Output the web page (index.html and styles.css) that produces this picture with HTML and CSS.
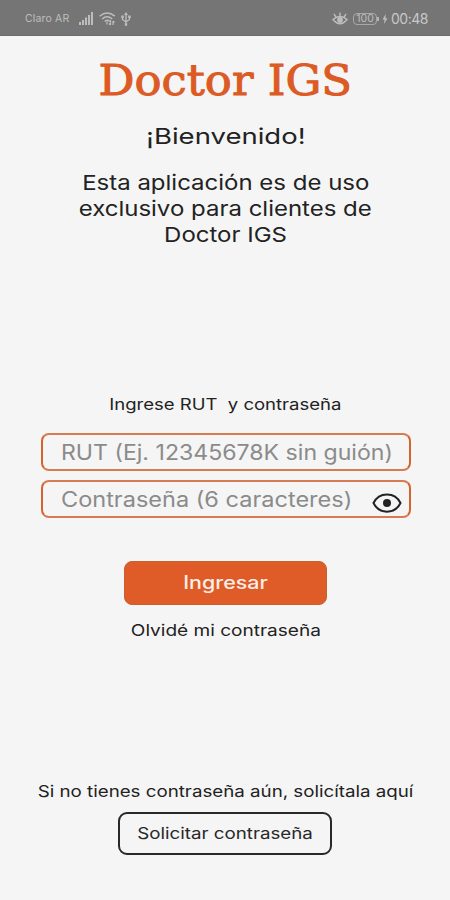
FILE: index.html
```
<!DOCTYPE html>
<html lang="es">
<head>
<meta charset="utf-8">
<title>Doctor IGS</title>
<link rel="stylesheet" href="styles.css">
</head>
<body>
<header class="status">
  <span class="carrier">Claro AR</span>
  <svg class="signal" width="14" height="13" viewBox="0 0 14 13" fill="currentColor"><path d="M0 10h2v3H0zM3 8h2v5H3zM6 5.500h2V13H6zM9 3h2v10H9zM12 0h2v13h-2z"/></svg>
  <svg class="wifi" width="17" height="14" viewBox="0 0 17 14" fill="none" stroke="currentColor" stroke-width="1.500"><path d="M.7 4.200Q8-2 15.800 4.200M3.200 7Q8 2.500 13.200 7M5.700 9.500Q8 7 10.800 9.500"/><path d="M8 9.500v3M11.500 8v5m-1.500-1.500 1.500 1.500M14 13V9m0 0 1.500 1.500" stroke-width="1.200"/></svg>
  <svg class="usb" width="10" height="14" viewBox="0 0 10 14" fill="none" stroke="currentColor" stroke-width="1.300"><path d="M5 13V2M1.500 4.500v3L5 10l3.500-2.500v-3"/><path d="M5 0l2 3H3zM.3 3.500h2.500V6H.3zM7.200 3.500h2.500V6H7.200zM3.800 11.300h2.400v2.400H3.800z" fill="currentColor" stroke="none"/></svg>
  <svg class="comfort" width="16" height="14" viewBox="0 0 16 14" fill="none" stroke="currentColor" stroke-width="1.400"><path d="M1 7.500Q8 1.500 15 7.500 8 16 1 7.500zM8 4V.5M3.800 4.800 2 2M12.200 4.800 14 2"/><circle cx="8" cy="8" r="2.200" fill="currentColor"/></svg>
  <span class="battery">100</span>
  <svg class="bolt" width="6" height="12" viewBox="0 0 6 12" fill="currentColor"><path d="M3.700 1 .5 6.500h2L2 11l3.500-5.700h-2z"/></svg>
  <span class="clock">00:48</span>
</header>
<main class="screen">
  <h1 class="brand"><span class="t">Doctor IGS</span></h1>
  <h2 class="welcome"><span class="t">¡Bienvenido!</span></h2>
  <p class="intro"><span class="t">Esta aplicación es de uso</span><br><span class="t">exclusivo para clientes de</span><br><span class="t">Doctor IGS</span></p>
  <form class="login">
    <p class="prompt"><span class="t">Ingrese RUT&nbsp; y contraseña</span></p>
    <div class="field"><span class="hint hint-rut">RUT (Ej. 12345678K sin guión)</span></div>
    <div class="field"><span class="hint hint-pass">Contraseña (6 caracteres)</span>
      <svg class="eye" width="30" height="20" viewBox="0 0 30 20" fill="none" stroke="#222" stroke-width="2"><path d="M1.500 10C7-1.500 23-1.500 28.500 10 23 21.500 7 21.500 1.500 10z"/><circle cx="15" cy="10" r="4" fill="#222" stroke="none"/></svg>
    </div>
    <button class="submit" type="button"><span class="t">Ingresar</span></button>
    <a class="forgot"><span class="t">Olvidé mi contraseña</span></a>
  </form>
  <section class="request">
    <p class="ask"><span class="t">Si no tienes contraseña aún, solicítala aquí</span></p>
    <button class="outline" type="button"><span class="t">Solicitar contraseña</span></button>
  </section>
</main>
</body>
</html>
```
FILE: styles.css
```
* { box-sizing: border-box; margin: 0; padding: 0; }
body {
  width: 450px;
  height: 900px;
  background: #f5f5f5;
  color: #222;
  font-family: Inter, sans-serif;
  overflow: hidden;
}
.status {
  display: flex;
  align-items: center;
  height: 36px;
  padding: 2px 22px 0 25px;
  background: #757575;
  border-bottom: 1px solid #6c6c6c;
  color: #bdbdbd;
}
.status svg { flex: none; }
.carrier { width: 54px; font-size: 10.500px; letter-spacing: .15px; white-space: nowrap; }
.wifi { margin-left: 6px; }
.usb { margin-left: 5px; }
.comfort { margin-left: auto; }
.battery {
  position: relative;
  width: 24px;
  height: 12px;
  margin-left: 5px;
  border: 1px solid #a8a8a8;
  border-radius: 4px;
  font-size: 10.500px;
  line-height: 10px;
  text-align: center;
}
.battery::after {
  content: "";
  position: absolute;
  right: -3px;
  top: 3px;
  width: 2px;
  height: 4px;
  background: #b4b4b4;
}
.bolt { margin: 0 3px 0 5px; }
.clock { width: 37px; font-size: 14px; letter-spacing: -.5px; color: #c8c8c8; }

.screen { display: flex; flex-direction: column; align-items: center; padding-left: 1px; }
.t { display: inline-block; white-space: nowrap; transform: scaleX(var(--sx, 1.17)); }
.brand {
  --sx: 1.045;
  margin-top: 20px;
  font: 400 43px/48px "DejaVu Serif", serif;
  color: #dc5a24;
  -webkit-text-stroke: 1px #dc5a24;
}
.welcome { --sx: 1.25; margin-top: 17px; font-size: 22px; font-weight: 400; line-height: 30px; }
.intro { margin-top: 19px; font-size: 20.500px; line-height: 26px; text-align: center; }
.login { display: flex; flex-direction: column; align-items: center; width: 370px; margin-top: 146px; }
.prompt { --sx: 1.157; font-size: 16px; line-height: 20px; }
.field {
  display: flex;
  align-items: center;
  width: 370px;
  height: 38px;
  margin-top: 9px;
  padding: 0 7px 0 18px;
  border: 2px solid #d3632f;
  border-top-color: #d87a52;
  border-bottom-color: #d87a52;
  border-radius: 8px;
}
.prompt + .field { margin-top: 19px; }
.hint { flex: 1; font-size: 21px; color: #8b8b8b; white-space: nowrap; transform-origin: left; }
.hint-rut { transform: scaleX(1.1); }
.hint-pass { transform: scaleX(1.12); }
.eye { flex: none; margin-top: 7px; }
.submit {
  --sx: 1.19;
  width: 203px;
  height: 44px;
  margin-top: 43px;
  padding-bottom: 2px;
  border: 1px solid #c8602f;
  border-radius: 8px;
  background: #df5c28;
  color: #fbeee6;
  font: 500 18px Inter, sans-serif;
}
.forgot { --sx: 1.19; margin-top: 15px; font-size: 16px; line-height: 20px; }
.request { display: flex; flex-direction: column; align-items: center; margin-top: 141px; }
.ask { font-size: 16px; line-height: 20px; }
.outline {
  width: 214px;
  height: 43px;
  margin-top: 11px;
  padding-bottom: 1px;
  border: 2px solid #282828;
  border-radius: 9px;
  background: transparent;
  color: #282828;
  font: 400 16px Inter, sans-serif;
}
```
